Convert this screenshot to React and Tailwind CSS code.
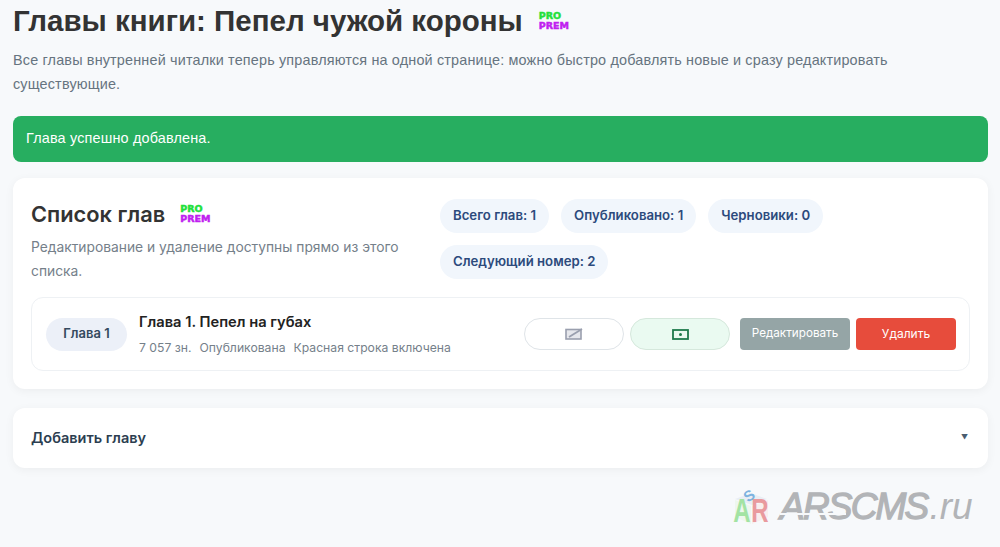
import React from 'react';

// PRO / PREM tag next to headings
function Tier() {
  return (
    <span className="inline-flex flex-col font-['DejaVu_Sans'] font-bold text-[9.5px] leading-[10px] [-webkit-text-stroke:0.5px]">
      <span className="text-[#22e03a]">PRO</span>
      <span className="text-[#c020f0]">PREM</span>
    </span>
  );
}

function Stat({ children }) {
  return (
    <span className="rounded-full bg-[#f1f6fc] px-[13px] h-[34px] flex items-center text-[13.2px] font-semibold text-[#2c4a7c]">
      {children}
    </span>
  );
}

function Watermark() {
  return (
    <div className="absolute left-[732px] top-[487px] flex items-center gap-[9px] select-none">
      <svg width="39" height="42" viewBox="0 0 39 42">
        <path d="M19 6 L35 12 L20 18 L3 12 Z" fill="#e9eef4" />
        <path d="M3 13 L19 19 L19 37 L3 30 Z" fill="#eef7ee" />
        <path d="M20 19 L36 13 L36 30 L20 37 Z" fill="#f8eeee" />
        <text x="0" y="0" textAnchor="middle" fontSize="15" fontWeight="700" fill="#7db3e0" fontFamily="Liberation Sans" transform="translate(20 13) rotate(-35)">S</text>
        <text x="0" y="0" textAnchor="middle" fontSize="24" fontWeight="700" fill="#a3e3a3" fontFamily="Liberation Sans" transform="translate(10 35) scale(1 1.4)">A</text>
        <text x="0" y="0" textAnchor="middle" fontSize="24" fontWeight="700" fill="#e99a9e" fontFamily="Liberation Sans" transform="translate(28 35) scale(1 1.4)">R</text>
      </svg>
      <span className="relative font-['Liberation_Sans'] italic text-[37px] leading-none text-[#b2b4b7] -mt-[4px]">
        <span className="tracking-[-1.8px] [-webkit-text-stroke:1.3px]">ARSCMS</span>
        <span className="ml-[2px]">.ru</span>
        <span className="absolute left-0 top-[25px] h-[2px] w-[66px] bg-[#f7f9fb]"></span>
      </span>
    </div>
  );
}

export default function App() {
  return (
    <div className="relative h-[547px] overflow-hidden bg-[#f7f9fb] pl-[13px] pr-[12px] pt-[4px] font-['Liberation_Sans'] text-[#2c3e50]">
      <div className="flex items-center gap-[16px] h-[34px]">
        <h1 className="text-[29.5px] font-bold text-[#333333] leading-none">Главы книги: Пепел чужой короны</h1>
        <Tier />
      </div>
      <p className="mt-[10px] text-[14.4px] leading-[24px] text-[#667480] tracking-[0.17px] w-[900px]">
        Все главы внутренней читалки теперь управляются на одной странице: можно быстро добавлять новые и сразу редактировать существующие.
      </p>

      <div className="mt-[20px] h-[46px] rounded-lg bg-[#27ae60] px-[13px] flex items-center text-[14.4px] text-white tracking-[0.18px]">
        Глава успешно добавлена.
      </div>

      <section className="mt-[16px] h-[211px] rounded-xl bg-white px-[18px] pt-[18px] shadow-[0_2px_10px_rgba(0,0,0,0.05)] font-['Inter']">
        <div className="flex">
          <div className="w-[409px]">
            <div className="flex items-center gap-[15px] h-[36px]">
              <h2 className="text-[21.8px] font-semibold text-[#333333]">Список глав</h2>
              <Tier />
            </div>
            <p className="mt-[3px] text-[13.8px] leading-[24px] text-[#75808a]">
              Редактирование и удаление доступны прямо из этого списка.
            </p>
          </div>
          <div className="flex flex-wrap content-start gap-x-[12px] gap-y-[12px] flex-1 pt-[3px]">
            <Stat>Всего глав: 1</Stat>
            <Stat>Опубликовано: 1</Stat>
            <Stat>Черновики: 0</Stat>
            <Stat>Следующий номер: 2</Stat>
          </div>
        </div>

        <div className="mt-[14px] h-[74px] rounded-xl border border-[#eef1f4] pl-[14px] pr-[13px] flex items-center">
          <span className="w-[81px] h-[33px] rounded-full bg-[#ecf0f8] flex items-center justify-center text-[13px] font-semibold text-[#34495e]">Глава 1</span>
          <div className="ml-[12px] flex-1">
            <div className="text-[14.7px] font-semibold text-[#222222] leading-[20px]">Глава 1. Пепел на губах</div>
            <div className="mt-[8px] flex gap-[8px] text-[12.2px] text-[#75808a] leading-[16px]">
              <span>7 057 зн.</span><span>Опубликована</span><span>Красная строка включена</span>
            </div>
          </div>
          <div className="flex items-center">
            <button className="w-[100px] h-[32px] rounded-full border border-[#dfe4e8] bg-white flex items-center justify-center">
              <svg width="18" height="12" viewBox="0 0 18 12" fill="none">
                <rect x="1" y="1.5" width="15" height="9.5" fill="#e6e7ec" stroke="#9a9fae" strokeWidth="1.6" />
                <path d="M4 9 L17 1" stroke="#9a9fae" strokeWidth="1.8" />
              </svg>
            </button>
            <button className="ml-[6px] w-[100px] h-[32px] rounded-full border border-[#d5e8dc] bg-[#eafaf1] flex items-center justify-center">
              <svg width="17" height="11" viewBox="0 0 17 11" fill="none">
                <rect x="1" y="1" width="15" height="9" stroke="#1e7a4c" strokeWidth="1.8" />
                <circle cx="8.5" cy="5.5" r="1.5" fill="#1e7a4c" />
              </svg>
            </button>
            <button className="ml-[10px] w-[110px] h-[32px] rounded bg-[#95a5a6] text-white text-[11.7px]">Редактировать</button>
            <button className="ml-[6px] w-[100px] h-[32px] rounded bg-[#e74c3c] text-white text-[12px]">Удалить</button>
          </div>
        </div>
      </section>

      <section className="mt-[19px] h-[60px] rounded-xl bg-white px-[18px] flex items-center justify-between shadow-[0_2px_10px_rgba(0,0,0,0.05)] font-['Inter']">
        <span className="text-[14.5px] font-semibold text-[#2c3e50]">Добавить главу</span>
        <span className="text-[7px] text-[#4a5d70] mr-[2px]">▼</span>
      </section>

      <Watermark />
    </div>
  );
}
